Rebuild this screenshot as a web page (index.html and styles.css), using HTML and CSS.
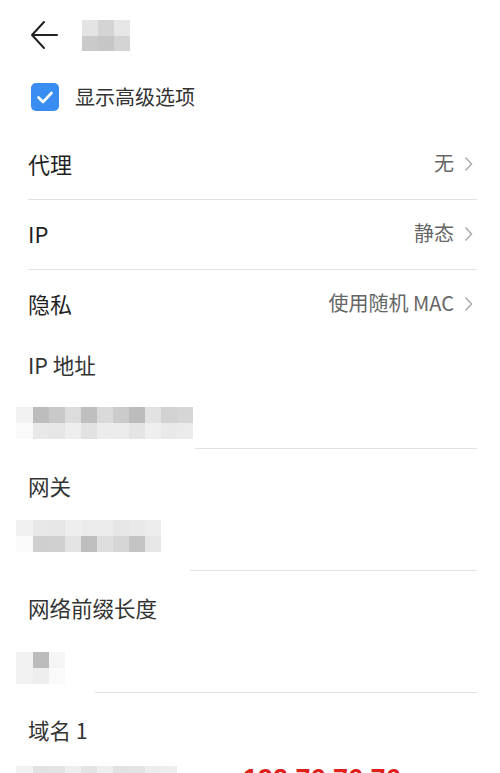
FILE: index.html
```html
<!DOCTYPE html>
<html lang="zh-CN">
<head>
    <meta charset="UTF-8">
    <meta name="viewport" content="width=device-width, initial-scale=1.0">
    <title>网络详情</title>
    <link rel="stylesheet" href="styles.css">
</head>
<body>

    <!-- Top bar -->
    <div class="topbar">
        <svg class="back" width="30" height="30" viewBox="0 0 30 30">
            <path d="M28 15 H3 M15 2 L3 15 L15 28" fill="none" stroke="#222" stroke-width="2" stroke-linecap="round" stroke-linejoin="round"/>
        </svg>
        <div class="title-mask">
            <span class="m m-e4"></span><span class="m m-d4"></span><span class="m m-e6"></span>
            <span class="m m-ca"></span><span class="m m-c6"></span><span class="m m-d4"></span>
        </div>
    </div>

    <!-- Advanced options -->
    <div class="check-row">
        <span class="checkbox">
            <svg width="28" height="28" viewBox="0 0 28 28">
                <path d="M7.5 14.5 L12 19 L20.5 10" fill="none" stroke="#fff" stroke-width="2.6" stroke-linecap="round" stroke-linejoin="round"/>
            </svg>
        </span>
        <span class="check-label">显示高级选项</span>
    </div>

    <div class="list">
        <div class="row">
            <span class="row-title">代理</span>
            <span class="row-value">无<svg class="chev" width="9" height="16" viewBox="0 0 9 16"><path d="M1.5 1.5 L7.5 8 L1.5 14.5" fill="none" stroke="#adadad" stroke-width="1.5"/></svg></span>
        </div>
        <div class="row">
            <span class="row-title">IP</span>
            <span class="row-value">静态<svg class="chev" width="9" height="16" viewBox="0 0 9 16"><path d="M1.5 1.5 L7.5 8 L1.5 14.5" fill="none" stroke="#adadad" stroke-width="1.5"/></svg></span>
        </div>
        <div class="row no-line">
            <span class="row-title">隐私</span>
            <span class="row-value">使用随机 MAC<svg class="chev" width="9" height="16" viewBox="0 0 9 16"><path d="M1.5 1.5 L7.5 8 L1.5 14.5" fill="none" stroke="#adadad" stroke-width="1.5"/></svg></span>
        </div>
    </div>

    <!-- Static fields -->
    <div class="field first">
        <div class="field-label">IP 地址</div>
        <div class="mask mask-ip">
            <span class="m m-f2"></span><span class="m m-bd"></span><span class="m m-c8"></span><span class="m m-dc"></span><span class="m m-bf"></span><span class="m m-da"></span><span class="m m-cb"></span><span class="m m-bc"></span><span class="m m-e2"></span><span class="m m-d2"></span><span class="m m-d6"></span>
            <span class="m m-fa"></span><span class="m m-e8"></span><span class="m m-e6"></span><span class="m m-ee"></span><span class="m m-e2"></span><span class="m m-ec"></span><span class="m m-eb"></span><span class="m m-e4"></span><span class="m m-ef"></span><span class="m m-e9"></span><span class="m m-eb"></span>
        </div>
        <div class="rule rule-ip"></div>
    </div>

    <div class="field">
        <div class="field-label">网关</div>
        <div class="mask mask-gw">
            <span class="m m-f0"></span><span class="m m-e8"></span><span class="m m-e6"></span><span class="m m-ee"></span><span class="m m-eb"></span><span class="m m-eb"></span><span class="m m-e6"></span><span class="m m-e9"></span><span class="m m-ed"></span>
            <span class="m m-fa"></span><span class="m m-cf"></span><span class="m m-d0"></span><span class="m m-e4"></span><span class="m m-be"></span><span class="m m-de"></span><span class="m m-d6"></span><span class="m m-c4"></span><span class="m m-e6"></span>
        </div>
        <div class="rule rule-gw"></div>
    </div>

    <div class="field">
        <div class="field-label">网络前缀长度</div>
        <div class="mask mask-pre">
            <span class="m m-f2"></span><span class="m m-bc"></span><span class="m m-f5"></span>
            <span class="m m-f2"></span><span class="m m-ee"></span><span class="m m-fa"></span>
        </div>
        <div class="rule rule-pre"></div>
    </div>

    <div class="field last">
        <div class="field-label">域名 1</div>
        <div class="mask mask-dns">
            <span class="m m-f2"></span><span class="m m-e2"></span><span class="m m-e4"></span><span class="m m-ee"></span><span class="m m-e4"></span><span class="m m-ee"></span><span class="m m-e2"></span><span class="m m-e4"></span><span class="m m-ec"></span><span class="m m-ee"></span>
        </div>
        <div class="note">192.76.76.76</div>
    </div>

</body>
</html>
```

FILE: styles.css
```css
body {
    margin: 0;
    padding: 0;
    background: #ffffff;
    font-family: "Noto Sans CJK SC", "Noto Sans", sans-serif;
    color: #1f1f1f;
    overflow: hidden;
    height: 773px;
}

/* Top bar */
.topbar {
    height: 70px;
    display: flex;
    align-items: center;
    padding-left: 29px;
}

.back {
    display: block;
}

.title-mask {
    display: grid;
    grid-template-columns: repeat(3, 16px);
    grid-template-rows: 16px 15px;
    margin-left: 23px;
}

/* Checkbox row */
.check-row {
    height: 54px;
    display: flex;
    align-items: center;
    padding-left: 31px;
}

.checkbox {
    width: 28px;
    height: 28px;
    border-radius: 5px;
    background: #3a8df0;
    display: block;
}

.checkbox svg {
    display: block;
}

.check-label {
    margin-left: 16px;
    font-size: 20px;
    color: #333;
    line-height: 28px;
}

/* Settings list */
.list {
    margin-top: 6px;
    padding: 0 23px 0 28px;
}

.row {
    height: 70px;
    box-sizing: border-box;
    padding-bottom: 4px;
    display: flex;
    align-items: center;
    justify-content: space-between;
    border-bottom: 1px solid #e2e2e2;
}

.row.no-line {
    border-bottom: none;
    height: 69px;
}

.row-title {
    font-size: 22px;
    color: #1f1f1f;
}

.row-value {
    font-size: 20px;
    color: #666;
    display: flex;
    align-items: center;
}

.chev {
    display: block;
    margin-left: 10px;
    margin-right: 4px;
    margin-top: 2px;
}

/* Static IP fields */
.field {
    position: relative;
    height: 122px;
    box-sizing: border-box;
    padding-top: 22px;
}

.field.first {
    height: 110px;
    padding-top: 11px;
}

.field-label {
    font-size: 21.5px;
    line-height: 30px;
    color: #333;
    padding-left: 28px;
}

.mask {
    display: grid;
    grid-auto-rows: 16px;
    margin-left: 16px;
}

.mask-ip {
    grid-template-columns: 17px repeat(10, 16px);
    margin-top: 27px;
}

.mask-gw {
    grid-template-columns: 17px repeat(8, 16px);
    margin-top: 19px;
}

.mask-pre {
    grid-template-columns: 17px 16px 16px;
    margin-top: 29px;
}

.mask-dns {
    grid-template-columns: 17px repeat(9, 16px);
    margin-top: 21px;
}

.rule {
    position: absolute;
    left: 28px;
    right: 23px;
    bottom: 0;
    height: 1px;
    background: #e2e2e2;
}

.rule-ip { left: 195px; }
.rule-gw { left: 190px; }
.rule-pre { left: 95px; }

.note {
    position: absolute;
    left: 243px;
    top: 73px;
    font-family: "Liberation Sans", Arial, sans-serif;
    font-weight: bold;
    font-size: 27px;
    line-height: 27px;
    color: #e0201c;
}

/* Mosaic shades */
.m { display: block; }
.m-bc { background: #bcbcbc; }
.m-bd { background: #bdbdbd; }
.m-be { background: #bebebe; }
.m-bf { background: #bfbfbf; }
.m-c4 { background: #c4c4c4; }
.m-c6 { background: #c6c6c6; }
.m-c8 { background: #c8c8c8; }
.m-ca { background: #cacaca; }
.m-cb { background: #cbcbcb; }
.m-cf { background: #cfcfcf; }
.m-d0 { background: #d0d0d0; }
.m-d2 { background: #d2d2d2; }
.m-d4 { background: #d4d4d4; }
.m-d6 { background: #d6d6d6; }
.m-da { background: #dadada; }
.m-dc { background: #dcdcdc; }
.m-de { background: #dedede; }
.m-e2 { background: #e2e2e2; }
.m-e4 { background: #e4e4e4; }
.m-e6 { background: #e6e6e6; }
.m-e8 { background: #e8e8e8; }
.m-e9 { background: #e9e9e9; }
.m-eb { background: #ebebeb; }
.m-ec { background: #ececec; }
.m-ed { background: #ededed; }
.m-ee { background: #eeeeee; }
.m-ef { background: #efefef; }
.m-f0 { background: #f0f0f0; }
.m-f2 { background: #f2f2f2; }
.m-f5 { background: #f5f5f5; }
.m-fa { background: #fafafa; }
```
